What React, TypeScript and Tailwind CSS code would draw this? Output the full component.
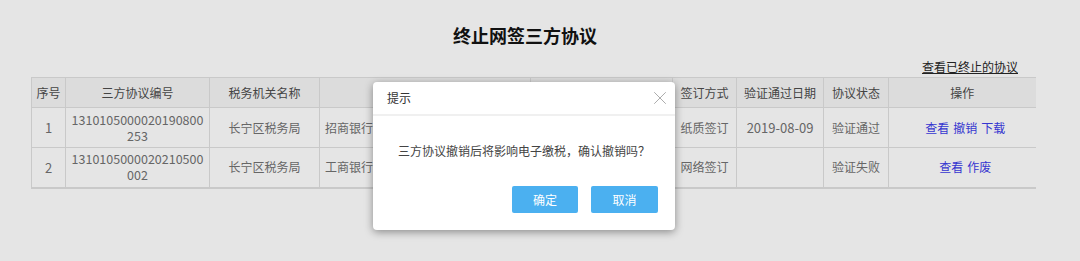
import { X } from "lucide-react";

const cols = [34, 144, 110, 211, 142, 64, 87, 65, 147];

// the two headers under the dialog are left blank
const headers = ["序号", "三方协议编号", "税务机关名称", "", "", "签订方式", "验证通过日期", "协议状态", "操作"];

const rows = [
  {
    no: "1",
    code: "1310105000020190800253",
    org: "长宁区税务局",
    bank: "招商银行股份有限公司上海长宁支行",
    account: "6214830212345678",
    way: "纸质签订",
    date: "2019-08-09",
    status: "验证通过",
    actions: ["查看", "撤销", "下载"],
  },
  {
    no: "2",
    code: "1310105000020210500002",
    org: "长宁区税务局",
    bank: "工商银行上海市长宁支行",
    account: "6222021001123456789",
    way: "网络签订",
    date: "",
    status: "验证失败",
    actions: ["查看", "作废"],
  },
];

function ConfirmDialog() {
  return (
    <div className="absolute left-[373px] top-[82px] w-[302px] h-[148px] bg-white rounded-[4px] shadow-[0_2px_8px_rgba(0,0,0,0.4)] flex flex-col">
      <div className="h-[34px] flex items-center justify-between pl-[14px] pr-[4px] border-b-2 border-[#f0f0f0] text-[12px] text-[#333]">
        <span>提示</span>
        <X className="w-[22px] h-[22px] text-[#9a9a9a]" strokeWidth={0.9} />
      </div>
      <div className="flex-1 flex flex-col">
        <div className="h-[70px] flex items-center justify-center text-[12px] text-[#444]">
          三方协议撤销后将影响电子缴税，确认撤销吗？
        </div>
        <div className="flex justify-end gap-[13px] pr-[17px]">
          <button className="w-[66px] h-[27px] bg-[#4bb0f0] text-white text-[12px] rounded-[2px]">确定</button>
          <button className="w-[67px] h-[27px] bg-[#4bb0f0] text-white text-[12px] rounded-[2px]">取消</button>
        </div>
      </div>
    </div>
  );
}

export default function App() {
  return (
    <div
      className="relative min-h-[261px] w-[1080px] bg-[#e5e5e5] overflow-hidden"
      style={{ fontFamily: '"Noto Sans CJK SC", "Liberation Sans", sans-serif' }}
    >
      <div className="w-[1050px] pt-[23px] text-center text-[18px] leading-[24px] font-bold text-[#111]">
        终止网签三方协议
      </div>
      <div className="ml-[31px] w-[1004px]">
        <div className="mt-[12px] mb-[2px] pr-[17px] text-right text-[12px] leading-[16px]">
          <a className="underline text-[#222]">查看已终止的协议</a>
        </div>
        <table className="border-collapse table-fixed w-[1004px] text-[12px] text-[#666]">
          <colgroup>
            {cols.map((w, i) => (
              <col key={i} style={{ width: w }} />
            ))}
          </colgroup>
          <thead>
            <tr className="h-[30px] bg-[#dcdcdc] text-[#444]">
              {headers.map((h, i) => (
                <th key={i} className="font-normal border-t border-b border-l border-[#c9c9c9] p-0">
                  {h}
                </th>
              ))}
            </tr>
          </thead>
          <tbody>
            {rows.map((r, idx) => (
              <tr key={r.no} className={`h-[40px] ${idx === rows.length - 1 ? "border-b-2" : "border-b"} border-[#c9c9c9]`}>
                <td className="border-l border-[#c9c9c9] text-center text-[13px]">{r.no}</td>
                <td className="border-l border-[#c9c9c9] text-center">
                  <div className="w-[135px] mx-auto break-all text-[12.5px] leading-[16px]">{r.code}</div>
                </td>
                <td className="border-l border-[#c9c9c9] text-center">{r.org}</td>
                <td className="border-l border-[#c9c9c9] px-[5px] whitespace-nowrap overflow-hidden">{r.bank}</td>
                <td className="border-l border-[#c9c9c9] text-center">{r.account}</td>
                <td className="border-l border-[#c9c9c9] text-center">{r.way}</td>
                <td className="border-l border-[#c9c9c9] text-center text-[13px]">{r.date}</td>
                <td className="border-l border-[#c9c9c9] text-center">{r.status}</td>
                <td className="border-l border-[#c9c9c9] text-center">
                  <div className="flex justify-center gap-[4px] pl-[6px] text-[#3535d0]">
                    {r.actions.map((a) => (
                      <span key={a}>{a}</span>
                    ))}
                  </div>
                </td>
              </tr>
            ))}
          </tbody>
        </table>
      </div>
      <ConfirmDialog />
    </div>
  );
}
